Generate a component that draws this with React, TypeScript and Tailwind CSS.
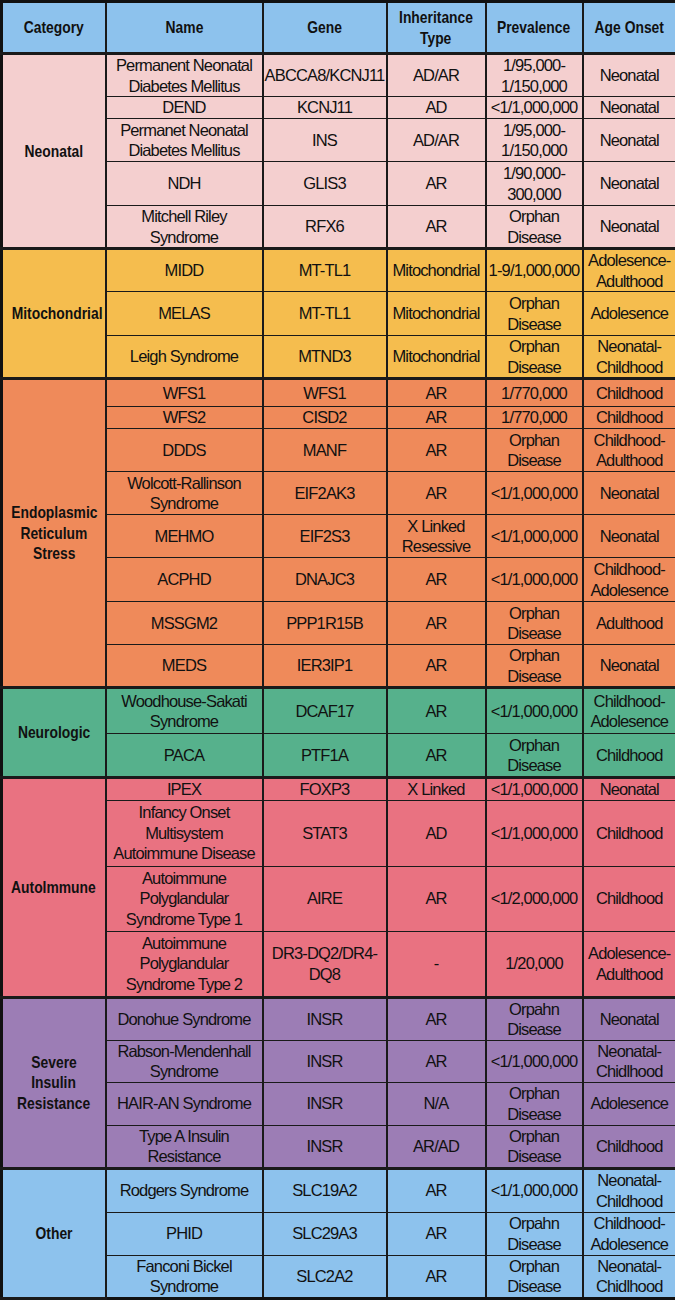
type Row = {
  name: string[];
  gene: string[];
  inh: string[];
  prev: string[];
  age: string[];
  h: string;
};

type Group = {
  category: string[];
  bg: string;
  rows: Row[];
};

const groups: Group[] = [
  {
    category: ["Neonatal"],
    bg: "bg-[#f4cfcf]",
    rows: [
      { name: ["Permanent Neonatal", "Diabetes Mellitus"], gene: ["ABCCA8/KCNJ11"], inh: ["AD/AR"], prev: ["1/95,000-", "1/150,000"], age: ["Neonatal"], h: "h-[43px]" },
      { name: ["DEND"], gene: ["KCNJ11"], inh: ["AD"], prev: ["<1/1,000,000"], age: ["Neonatal"], h: "h-[22px]" },
      { name: ["Permanet Neonatal", "Diabetes Mellitus"], gene: ["INS"], inh: ["AD/AR"], prev: ["1/95,000-", "1/150,000"], age: ["Neonatal"], h: "h-[43px]" },
      { name: ["NDH"], gene: ["GLIS3"], inh: ["AR"], prev: ["1/90,000-", "300,000"], age: ["Neonatal"], h: "h-[44px]" },
      { name: ["Mitchell Riley", "Syndrome"], gene: ["RFX6"], inh: ["AR"], prev: ["Orphan", "Disease"], age: ["Neonatal"], h: "h-[43px]" },
    ],
  },
  {
    category: ["Mitochondrial"],
    bg: "bg-[#f5bd4e]",
    rows: [
      { name: ["MIDD"], gene: ["MT-TL1"], inh: ["Mitochondrial"], prev: ["1-9/1,000,000"], age: ["Adolesence-", "Adulthood"], h: "h-[43px]" },
      { name: ["MELAS"], gene: ["MT-TL1"], inh: ["Mitochondrial"], prev: ["Orphan", "Disease"], age: ["Adolesence"], h: "h-[44px]" },
      { name: ["Leigh Syndrome"], gene: ["MTND3"], inh: ["Mitochondrial"], prev: ["Orphan", "Disease"], age: ["Neonatal-", "Childhood"], h: "h-[42px]" },
    ],
  },
  {
    category: ["Endoplasmic", "Reticulum", "Stress"],
    bg: "bg-[#ef8a5a]",
    rows: [
      { name: ["WFS1"], gene: ["WFS1"], inh: ["AR"], prev: ["1/770,000"], age: ["Childhood"], h: "h-[28px]" },
      { name: ["WFS2"], gene: ["CISD2"], inh: ["AR"], prev: ["1/770,000"], age: ["Childhood"], h: "h-[22px]" },
      { name: ["DDDS"], gene: ["MANF"], inh: ["AR"], prev: ["Orphan", "Disease"], age: ["Childhood-", "Adulthood"], h: "h-[43px]" },
      { name: ["Wolcott-Rallinson", "Syndrome"], gene: ["EIF2AK3"], inh: ["AR"], prev: ["<1/1,000,000"], age: ["Neonatal"], h: "h-[43px]" },
      { name: ["MEHMO"], gene: ["EIF2S3"], inh: ["X Linked", "Resessive"], prev: ["<1/1,000,000"], age: ["Neonatal"], h: "h-[43px]" },
      { name: ["ACPHD"], gene: ["DNAJC3"], inh: ["AR"], prev: ["<1/1,000,000"], age: ["Childhood-", "Adolesence"], h: "h-[44px]" },
      { name: ["MSSGM2"], gene: ["PPP1R15B"], inh: ["AR"], prev: ["Orphan", "Disease"], age: ["Adulthood"], h: "h-[43px]" },
      { name: ["MEDS"], gene: ["IER3IP1"], inh: ["AR"], prev: ["Orphan", "Disease"], age: ["Neonatal"], h: "h-[43px]" },
    ],
  },
  {
    category: ["Neurologic"],
    bg: "bg-[#56b18c]",
    rows: [
      { name: ["Woodhouse-Sakati", "Syndrome"], gene: ["DCAF17"], inh: ["AR"], prev: ["<1/1,000,000"], age: ["Childhood-", "Adolesence"], h: "h-[46px]" },
      { name: ["PACA"], gene: ["PTF1A"], inh: ["AR"], prev: ["Orphan", "Disease"], age: ["Childhood"], h: "h-[44px]" },
    ],
  },
  {
    category: ["AutoImmune"],
    bg: "bg-[#e97281]",
    rows: [
      { name: ["IPEX"], gene: ["FOXP3"], inh: ["X Linked"], prev: ["<1/1,000,000"], age: ["Neonatal"], h: "h-[22px]" },
      { name: ["Infancy Onset", "Multisystem", "Autoimmune Disease"], gene: ["STAT3"], inh: ["AD"], prev: ["<1/1,000,000"], age: ["Childhood"], h: "h-[66px]" },
      { name: ["Autoimmune", "Polyglandular", "Syndrome Type 1"], gene: ["AIRE"], inh: ["AR"], prev: ["<1/2,000,000"], age: ["Childhood"], h: "h-[65px]" },
      { name: ["Autoimmune", "Polyglandular", "Syndrome Type 2"], gene: ["DR3-DQ2/DR4-", "DQ8"], inh: ["-"], prev: ["1/20,000"], age: ["Adolesence-", "Adulthood"], h: "h-[66px]" },
    ],
  },
  {
    category: ["Severe", "Insulin", "Resistance"],
    bg: "bg-[#9c7db5]",
    rows: [
      { name: ["Donohue Syndrome"], gene: ["INSR"], inh: ["AR"], prev: ["Orpahn", "Disease"], age: ["Neonatal"], h: "h-[42px]" },
      { name: ["Rabson-Mendenhall", "Syndrome"], gene: ["INSR"], inh: ["AR"], prev: ["<1/1,000,000"], age: ["Neonatal-", "Chidlhood"], h: "h-[42px]" },
      { name: ["HAIR-AN Syndrome"], gene: ["INSR"], inh: ["N/A"], prev: ["Orphan", "Disease"], age: ["Adolesence"], h: "h-[43px]" },
      { name: ["Type A Insulin", "Resistance"], gene: ["INSR"], inh: ["AR/AD"], prev: ["Orphan", "Disease"], age: ["Childhood"], h: "h-[41px]" },
    ],
  },
  {
    category: ["Other"],
    bg: "bg-[#8dc2ed]",
    rows: [
      { name: ["Rodgers Syndrome"], gene: ["SLC19A2"], inh: ["AR"], prev: ["<1/1,000,000"], age: ["Neonatal-", "Childhood"], h: "h-[44px]" },
      { name: ["PHID"], gene: ["SLC29A3"], inh: ["AR"], prev: ["Orpahn", "Disease"], age: ["Childhood-", "Adolesence"], h: "h-[43px]" },
      { name: ["Fanconi Bickel", "Syndrome"], gene: ["SLC2A2"], inh: ["AR"], prev: ["Orphan", "Disease"], age: ["Neonatal-", "Chidlhood"], h: "h-[43px]" },
    ],
  },
];

function Lines({ lines, bold }: { lines: string[]; bold?: boolean }) {
  return (
    <>
      {lines.map((l, i) => (
        <div key={i} className="whitespace-nowrap">
          {bold ? <span className="inline-block scale-x-[0.84]">{l}</span> : l}
        </div>
      ))}
    </>
  );
}

export default function App() {
  const cell = "border-x-2 border-y border-[#1a1a1a] p-0 text-center align-middle";
  const bold = "text-[16.5px] font-bold tracking-normal";
  return (
    <div className="w-[675px] bg-white font-['Liberation_Sans',Arial,sans-serif] text-[16.5px] leading-[20.5px] tracking-[-0.85px] text-[#111]">
      <table className="w-[675px] table-fixed border-collapse border-[3px] border-[#111]">
        <colgroup>
          <col className="w-[104px]" />
          <col className="w-[157px]" />
          <col className="w-[124px]" />
          <col className="w-[99px]" />
          <col className="w-[97px]" />
          <col className="w-[94px]" />
        </colgroup>
        <thead>
          <tr className={`h-[52px] bg-[#8dc2ed] ${bold}`}>
            <th className={`${cell} border-b-[3px]`}>
              <Lines lines={["Category"]} bold />
            </th>
            <th className={`${cell} border-b-[3px]`}>
              <Lines lines={["Name"]} bold />
            </th>
            <th className={`${cell} border-b-[3px]`}>
              <Lines lines={["Gene"]} bold />
            </th>
            <th className={`${cell} border-b-[3px]`}>
              <Lines lines={["Inheritance", "Type"]} bold />
            </th>
            <th className={`${cell} border-b-[3px]`}>
              <Lines lines={["Prevalence"]} bold />
            </th>
            <th className={`${cell} border-b-[3px]`}>
              <Lines lines={["Age Onset"]} bold />
            </th>
          </tr>
        </thead>
        <tbody>
          {groups.map((g) =>
            g.rows.map((r, i) => {
              const top = i === 0 ? "border-t-[3px]" : "";
              return (
                <tr key={g.category.join() + i} className={`${r.h} ${g.bg}`}>
                  {i === 0 && (
                    <td rowSpan={g.rows.length} className={`${cell} ${top} border-b-[3px] ${bold}`}>
                      <Lines lines={g.category} bold />
                    </td>
                  )}
                  <td className={`${cell} ${top}`}>
                    <Lines lines={r.name} />
                  </td>
                  <td className={`${cell} ${top}`}>
                    <Lines lines={r.gene} />
                  </td>
                  <td className={`${cell} ${top}`}>
                    <Lines lines={r.inh} />
                  </td>
                  <td className={`${cell} ${top}`}>
                    <Lines lines={r.prev} />
                  </td>
                  <td className={`${cell} ${top}`}>
                    <Lines lines={r.age} />
                  </td>
                </tr>
              );
            })
          )}
        </tbody>
      </table>
    </div>
  );
}
